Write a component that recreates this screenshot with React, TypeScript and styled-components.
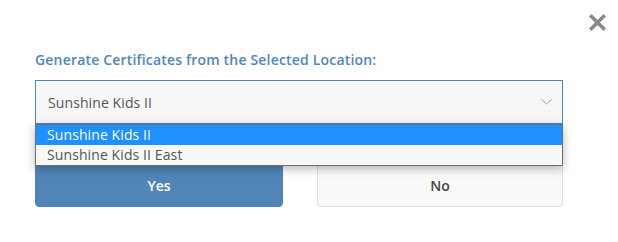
import React, { useState } from 'react';
import styled, { createGlobalStyle } from 'styled-components';

const GlobalStyle = createGlobalStyle`
  html, body {
    margin: 0;
    background: #ffffff;
  }
  body {
    font-family: "Open Sans", "Liberation Sans", sans-serif;
  }
`;

const Dialog = styled.div`
  width: 618px;
  height: 242px;
  box-sizing: border-box;
  padding: 14px 12px 0 35px;
  background: #fff;
`;

const Header = styled.div`
  display: flex;
  justify-content: flex-end;
  height: 16px;
`;

const CloseButton = styled.button`
  width: 17px;
  height: 17px;
  padding: 0;
  border: 0;
  background: transparent;
  cursor: pointer;
  display: flex;
  color: #8a8a8a;
`;

const Body = styled.div`
  width: 528px;
  display: flex;
  flex-direction: column;
`;

const Label = styled.label`
  margin-top: 20px;
  font-size: 14px;
  line-height: 20px;
  font-weight: 600;
  letter-spacing: 0.18px;
  color: #4f86b9;
`;

const SelectWrap = styled.div`
  position: relative;
  margin-top: 10px;
`;

const SelectBox = styled.div`
  height: 44px;
  box-sizing: border-box;
  border: 1px solid #4a87c5;
  background: linear-gradient(#f9f9f9, #f5f5f5);
  display: flex;
  align-items: center;
  justify-content: space-between;
  padding: 0 10px 0 12px;
  font-size: 14px;
  letter-spacing: 0.1px;
  color: #555;
`;

const Menu = styled.ul`
  position: absolute;
  top: 100%;
  left: 0;
  right: 0;
  margin: 0;
  padding: 0;
  list-style: none;
  border: 1px solid #6e6e6e;
  background: #f8f8f8;
  box-shadow: 0 3px 9px rgba(0, 0, 0, 0.28);
  z-index: 2;
`;

const Option = styled.li<{ $active?: boolean }>`
  height: 20px;
  line-height: 20px;
  padding-left: 11px;
  font-size: 14px;
  letter-spacing: 0.1px;
  color: ${(p) => (p.$active ? '#fff' : '#555')};
  background: ${(p) => (p.$active ? '#1e90ff' : 'transparent')};
`;

const Actions = styled.div`
  display: grid;
  grid-template-columns: 248px 246px;
  justify-content: space-between;
  margin-top: 39px;
`;

const Button = styled.button<{ $primary?: boolean }>`
  height: 44px;
  border-radius: 4px;
  font-family: inherit;
  font-size: 14px;
  font-weight: 600;
  cursor: pointer;
  border: 1px solid ${(p) => (p.$primary ? '#4f86b7' : '#dddddd')};
  background: ${(p) => (p.$primary ? '#4f86b7' : '#f9f9f9')};
  color: ${(p) => (p.$primary ? '#fff' : '#444')};
`;

const options = ['Sunshine Kids II', 'Sunshine Kids II East'];

export default function App() {
  const [selected] = useState(0);

  return (
    <>
      <GlobalStyle />
      <Dialog>
        <Header>
          <CloseButton aria-label="Close">
            <svg width="17" height="17" viewBox="0 0 17 17">
              <path d="M2.5 2.5 L14.5 14.5 M14.5 2.5 L2.5 14.5" stroke="currentColor" strokeWidth="3.6" strokeLinecap="square" />
            </svg>
          </CloseButton>
        </Header>
        <Body>
          <Label>Generate Certificates from the Selected Location:</Label>
          <SelectWrap>
            <SelectBox>
              <span>{options[selected]}</span>
              <svg width="11" height="6" viewBox="0 0 11 6">
                <path d="M0.5 0.5 L5.5 5 L10.5 0.5" fill="none" stroke="#9a9a9a" strokeWidth="1" />
              </svg>
            </SelectBox>
            <Menu>
              {options.map((o, i) => (
                <Option key={o} $active={i === selected}>{o}</Option>
              ))}
            </Menu>
          </SelectWrap>
          <Actions>
            <Button $primary>Yes</Button>
            <Button>No</Button>
          </Actions>
        </Body>
      </Dialog>
    </>
  );
}
